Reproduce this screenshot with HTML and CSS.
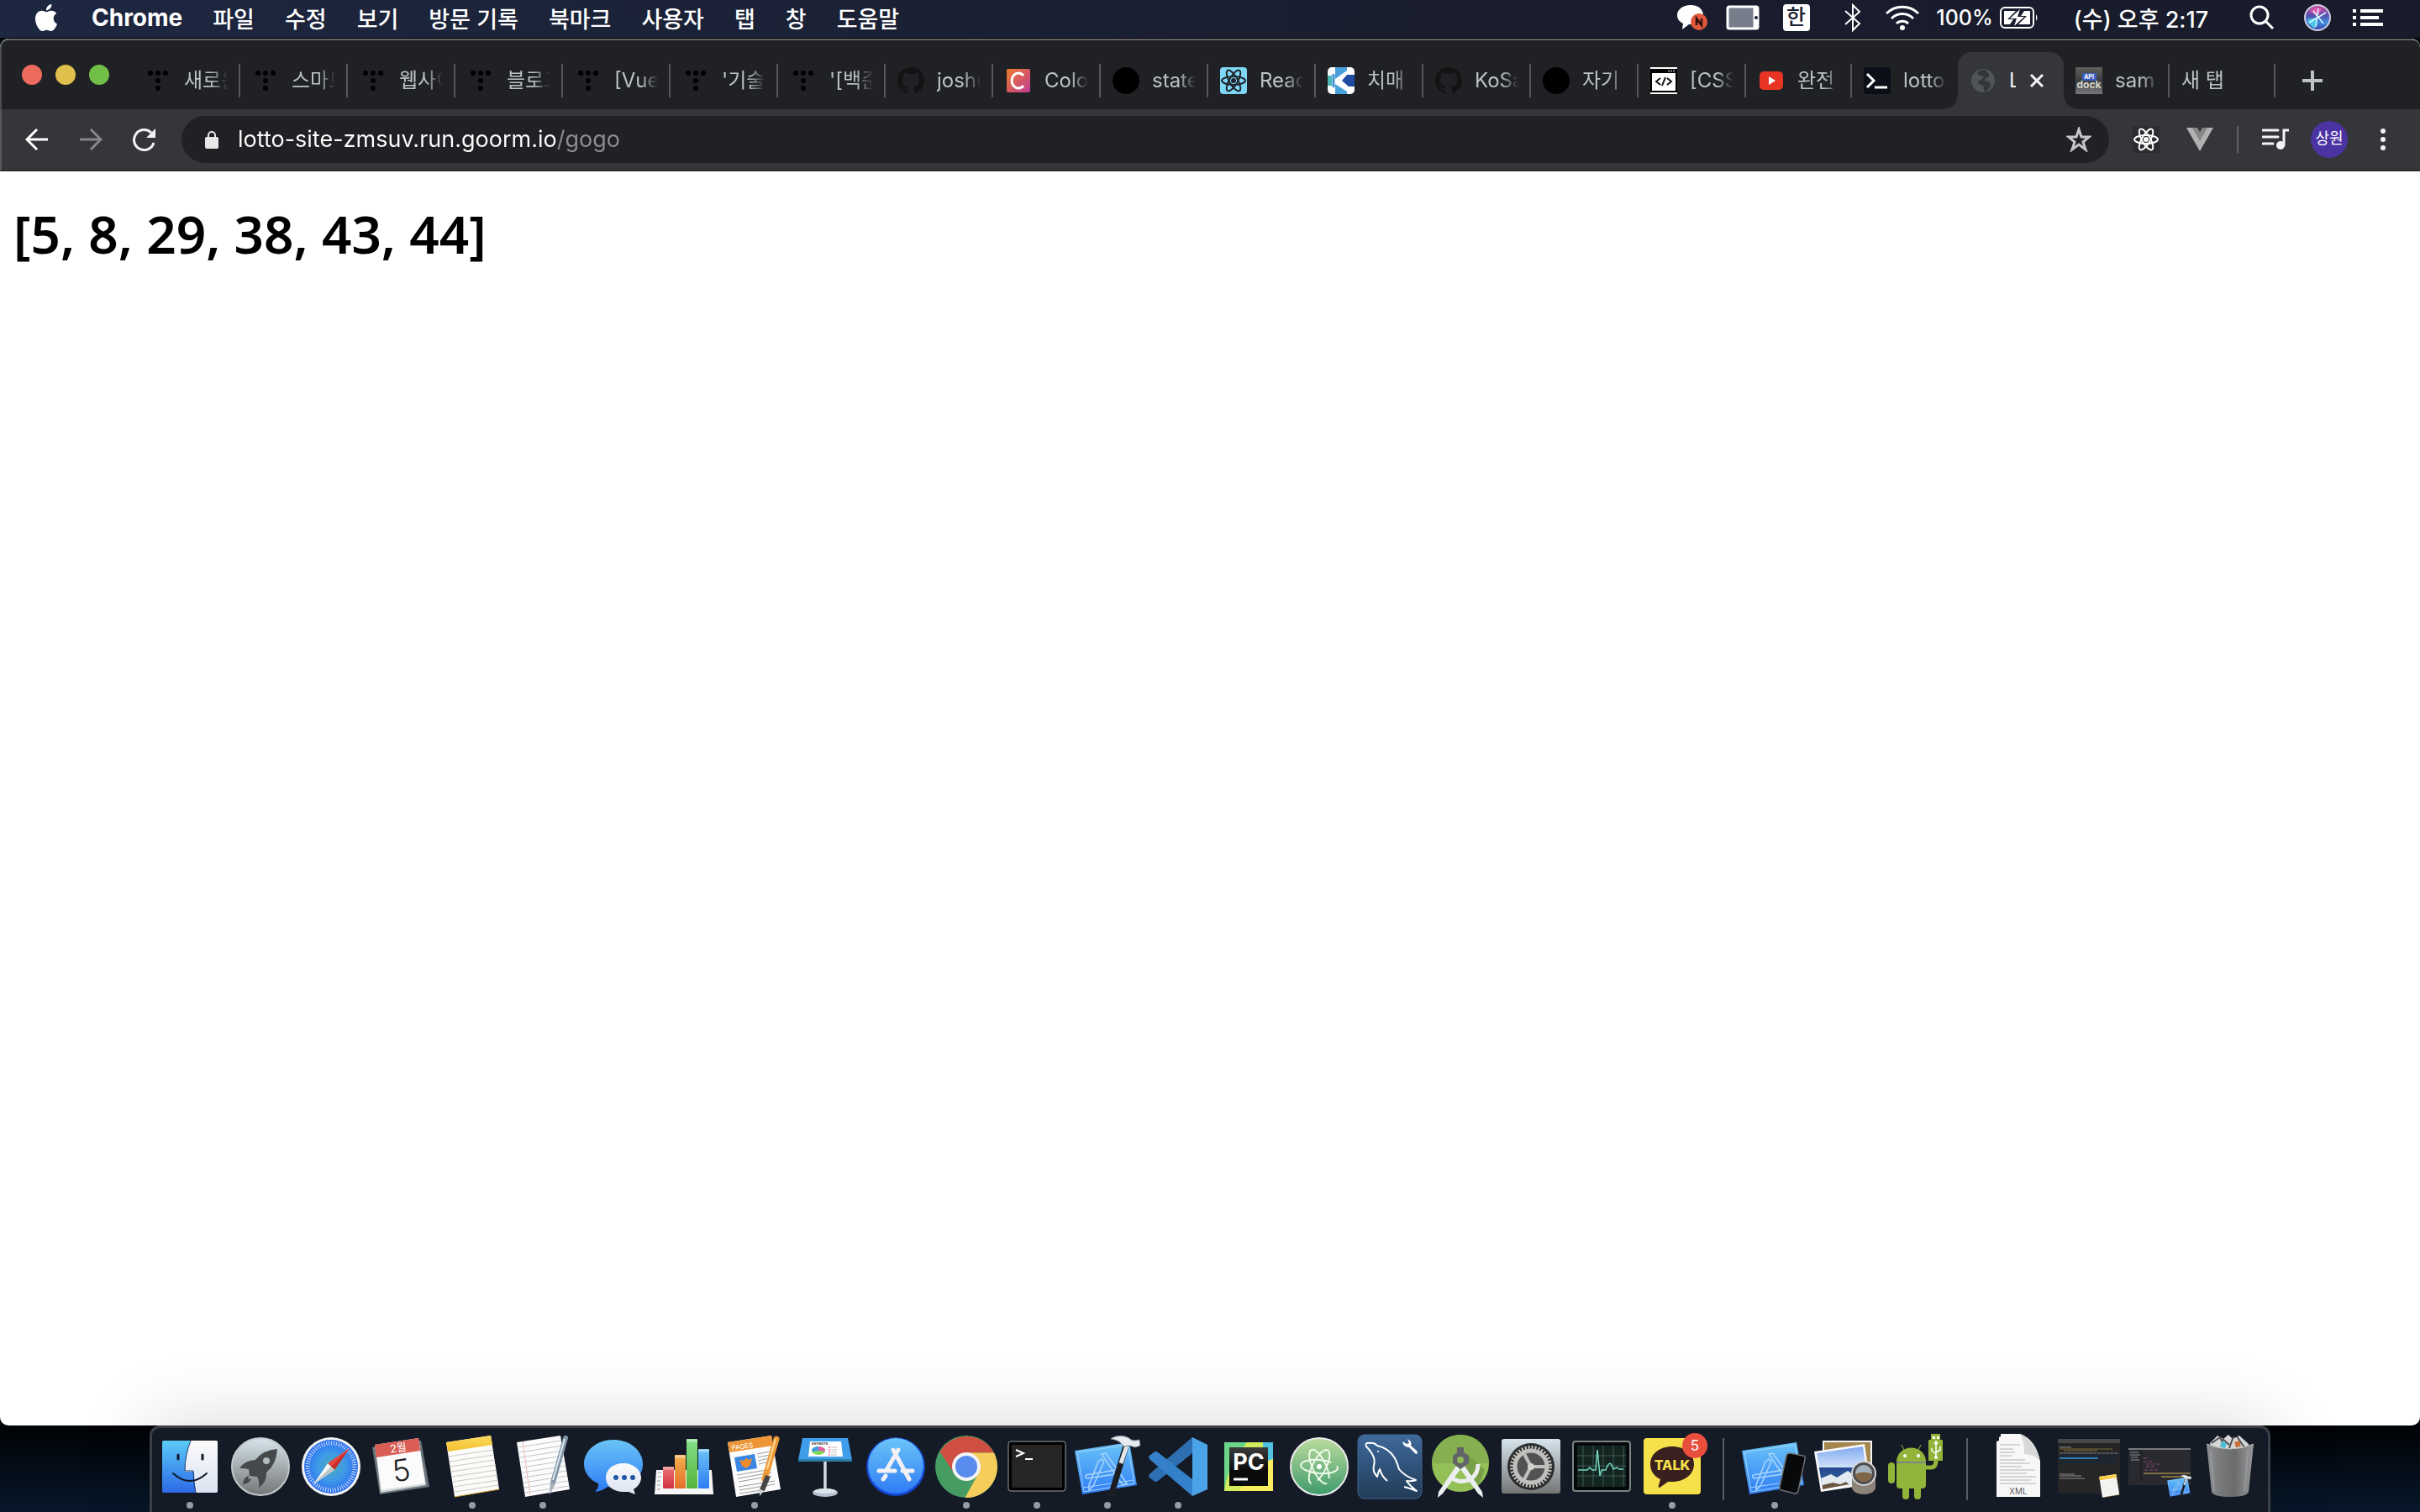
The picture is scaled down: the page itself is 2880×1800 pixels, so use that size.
FILE: index.html
```html
<!DOCTYPE html>
<html lang="ko">
<head>
    <meta charset="UTF-8">
    <meta name="viewport" content="width=device-width, initial-scale=1.0">
    <title>Lotto</title>
    <link rel="stylesheet" href="styles.css">
</head>
<body>
    <!-- shared gradients and repeated icons -->
    <svg class="defs" width="0" height="0" aria-hidden="true">
        <defs>
            <linearGradient id="g-blue" x1="0" y1="0" x2="0" y2="1"><stop offset="0" stop-color="#6ac4f7"/><stop offset="1" stop-color="#2f7cf6"/></linearGradient>
            <linearGradient id="g-finder" x1="0" y1="0" x2="0" y2="1"><stop offset="0" stop-color="#5ccbf8"/><stop offset="1" stop-color="#2c69e6"/></linearGradient>
            <linearGradient id="g-white" x1="0" y1="0" x2="0" y2="1"><stop offset="0" stop-color="#fafafa"/><stop offset="1" stop-color="#dbe4f2"/></linearGradient>
            <linearGradient id="g-steel" x1="0" y1="0" x2="0" y2="1"><stop offset="0" stop-color="#d6e5ec"/><stop offset="1" stop-color="#757575"/></linearGradient>
            <linearGradient id="g-metal" x1="0" y1="0" x2="1" y2="0"><stop offset="0" stop-color="#8b99a6"/><stop offset=".5" stop-color="#eef3f7"/><stop offset="1" stop-color="#7b8893"/></linearGradient>
            <linearGradient id="g-yellow" x1="0" y1="0" x2="0" y2="1"><stop offset="0" stop-color="#fddb60"/><stop offset="1" stop-color="#f3c02f"/></linearGradient>
            <linearGradient id="g-red" x1="0" y1="0" x2="0" y2="1"><stop offset="0" stop-color="#ee7474"/><stop offset="1" stop-color="#cf3242"/></linearGradient>
            <linearGradient id="g-orange" x1="0" y1="0" x2="0" y2="1"><stop offset="0" stop-color="#f4b04e"/><stop offset="1" stop-color="#e2702a"/></linearGradient>
            <linearGradient id="g-green" x1="0" y1="0" x2="0" y2="1"><stop offset="0" stop-color="#84e08a"/><stop offset="1" stop-color="#52b539"/></linearGradient>
            <linearGradient id="g-atom" x1="0" y1="0" x2="0" y2="1"><stop offset="0" stop-color="#bcdc9c"/><stop offset="1" stop-color="#3e9a6d"/></linearGradient>
            <linearGradient id="g-mysql" x1="0" y1="0" x2="0" y2="1"><stop offset="0" stop-color="#3e6a9b"/><stop offset="1" stop-color="#223b58"/></linearGradient>
            <linearGradient id="g-black" x1="0" y1="0" x2="0" y2="1"><stop offset="0" stop-color="#3c3c3c"/><stop offset=".6" stop-color="#0a0a0a"/></linearGradient>
            <linearGradient id="g-sea" x1="0" y1="0" x2="0" y2="1"><stop offset="0" stop-color="#7fa9ef"/><stop offset=".5" stop-color="#d2e2fa"/><stop offset=".5" stop-color="#23478f"/><stop offset="1" stop-color="#3f6f9f"/></linearGradient>
            <linearGradient id="g-trash" x1="0" y1="0" x2="1" y2="0"><stop offset="0" stop-color="#8f9193"/><stop offset=".3" stop-color="#77797b"/><stop offset=".6" stop-color="#6a6c6e"/><stop offset="1" stop-color="#97999b"/></linearGradient>
            <linearGradient id="g-color" x1="0" y1="0" x2="1" y2="1"><stop offset="0" stop-color="#ee7a2c"/><stop offset="1" stop-color="#c03c96"/></linearGradient>
            <linearGradient id="g-dock" x1="0" y1="0" x2="0" y2="1"><stop offset="0" stop-color="#5f605a"/><stop offset=".5" stop-color="#3b3d40"/><stop offset="1" stop-color="#77787f"/></linearGradient>
            <radialGradient id="g-safari"><stop offset="0" stop-color="#4aa9b8"/><stop offset=".5" stop-color="#3f9be8"/><stop offset="1" stop-color="#2b6df0"/></radialGradient>
            <linearGradient id="g-siri" x1="0" y1="0" x2="0" y2="1"><stop offset="0" stop-color="#d24f9f"/><stop offset=".4" stop-color="#5a4fae"/><stop offset=".7" stop-color="#3f8fe0"/><stop offset="1" stop-color="#3a3fa8"/></linearGradient>
        </defs>
        <symbol id="i-tistory" viewBox="0 0 32 32"><g fill="#000"><circle cx="7" cy="7" r="3"/><circle cx="16" cy="7" r="3"/><circle cx="25" cy="7" r="3"/><circle cx="16" cy="16" r="3"/><circle cx="16" cy="25" r="3"/></g></symbol>
        <symbol id="i-github" viewBox="0 0 16 16"><path fill="#141314" d="M8 0C3.58 0 0 3.58 0 8c0 3.54 2.29 6.53 5.47 7.59.4.07.55-.17.55-.38 0-.19-.01-.82-.01-1.49-2.01.37-2.53-.49-2.69-.94-.09-.23-.48-.94-.82-1.13-.28-.15-.68-.52-.01-.53.63-.01 1.08.58 1.23.82.72 1.21 1.87.87 2.33.66.07-.52.28-.87.51-1.07-1.78-.2-3.64-.89-3.64-3.95 0-.87.31-1.59.82-2.15-.08-.2-.36-1.02.08-2.12 0 0 .67-.21 2.2.82.64-.18 1.32-.27 2-.27s1.36.09 2 .27c1.53-1.04 2.2-.82 2.2-.82.44 1.1.16 1.92.08 2.12.51.56.82 1.27.82 2.15 0 3.07-1.87 3.75-3.65 3.95.29.25.54.73.54 1.48 0 1.07-.01 1.93-.01 2.2 0 .21.15.46.55.38A8.01 8.01 0 0 0 16 8c0-4.42-3.58-8-8-8z"/></symbol>
        <symbol id="i-ball" viewBox="0 0 32 32"><circle cx="16" cy="16" r="16" fill="#000"/></symbol>
        <symbol id="i-react" viewBox="0 0 32 32"><g fill="none" stroke="currentColor" stroke-width="2"><ellipse cx="16" cy="16" rx="14" ry="5"/><ellipse cx="16" cy="16" rx="14" ry="5" transform="rotate(60 16 16)"/><ellipse cx="16" cy="16" rx="14" ry="5" transform="rotate(120 16 16)"/></g><circle cx="16" cy="16" r="3" fill="currentColor"/></symbol>
        <symbol id="i-xcode" viewBox="0 0 84 84">
            <path d="M3 23 68 13 77 64 12 75Z" fill="url(#g-blue)"/>
            <path d="M6 25 66 16 74 62 14 72ZM13 67 73 58" fill="none" stroke="#a5d4fb" stroke-width="1"/>
            <path d="M16 52 58 45M17 56 58 50M16 52v4M31 36l4-3 3 3-13 29-5 5v-6ZM35 27l5-1 25 36-5 2Z" fill="none" stroke="#a9d6fb" stroke-width="1.5"/>
        </symbol>
        <symbol id="i-hammer" viewBox="0 0 84 84">
            <path d="M64 17 47 74" stroke="#1c1d20" stroke-width="7" stroke-linecap="round"/>
            <path d="M66 14 58 38" stroke="#dfe5ea" stroke-width="5"/>
            <path d="M46 9C52 4 64 4 70 10l4 1 6-1 1 7-6 2-7-2-7 1C58 12 52 10 46 9Z" fill="#e5ebf0" stroke="#78828c"/>
        </symbol>
        <symbol id="i-notes" viewBox="0 0 84 84">
            <path d="M11 13 64 5 74 69 21 78Z" fill="#fbfbf9"/>
            <path d="M11 13 64 5 66 16 13 24Z" fill="url(#g-yellow)"/>
            <path d="M14 30 67 22M15 36 68 28M16 42 69 34M17 48 70 40M18 54 71 46M19 60 72 52M20 66 73 58M21 72 73 64" stroke="#c9c9c5" stroke-width="1"/>
            <path d="M21 78 74 69" stroke="#d3a537" stroke-width="1"/>
        </symbol>
    </svg>

    <header class="menubar">
        <nav class="menus">
            <button class="menu apple" aria-label="Apple"><svg width="32" height="32" viewBox="0 0 24 24"><path fill="#fff" d="M12.152 6.896c-.948 0-2.415-1.078-3.96-1.04-2.04.027-3.91 1.183-4.961 3.014-2.117 3.675-.546 9.103 1.519 12.09 1.013 1.454 2.208 3.09 3.792 3.039 1.52-.065 2.09-.987 3.935-.987 1.831 0 2.35.987 3.96.948 1.637-.026 2.676-1.48 3.676-2.948 1.156-1.688 1.636-3.325 1.662-3.415-.039-.013-3.182-1.221-3.22-4.857-.026-3.04 2.48-4.494 2.597-4.559-1.429-2.09-3.623-2.324-4.39-2.376-2-.156-3.675 1.09-4.61 1.09zM15.53 3.83c.843-1.012 1.4-2.427 1.245-3.83-1.207.052-2.662.805-3.532 1.818-.78.896-1.454 2.338-1.273 3.714 1.338.104 2.715-.688 3.559-1.701"/></svg></button>
            <button class="menu app-name">Chrome</button>
            <button class="menu">파일</button>
            <button class="menu">수정</button>
            <button class="menu">보기</button>
            <button class="menu">방문 기록</button>
            <button class="menu">북마크</button>
            <button class="menu">사용자</button>
            <button class="menu">탭</button>
            <button class="menu">창</button>
            <button class="menu">도움말</button>
        </nav>
        <div class="status">
            <button class="status-item" aria-label="알림"><svg width="38" height="32" viewBox="0 0 38 32"><path fill="#fff" d="M17 1C8 1 1 6 1 13c0 5 3 8 7 10l-1 7 8-6h4l13-8C33 6 26 1 17 1Z"/><circle cx="27" cy="21" r="10" fill="#e2583c"/><path d="M24 25v-8l6 8v-8" fill="none" stroke="#2b1410" stroke-width="2.5"/></svg></button>
            <button class="status-item" aria-label="화면"><svg width="40" height="30" viewBox="0 0 40 30"><rect x="2" y="2" width="36" height="26" rx="2" fill="#787d8c" stroke="#fff" stroke-width="3"/><path d="M35 2v26" stroke="#fff" stroke-width="5"/><circle cx="36" cy="15" r="2" fill="#1a2033"/></svg></button>
            <button class="status-item input-source"><span class="han">한</span></button>
            <button class="status-item bluetooth" aria-label="블루투스"><svg width="22" height="34" viewBox="0 0 22 34"><path d="M2 9l17 15-8 8V2l8 8L2 25" fill="none" stroke="#fff" stroke-width="2"/></svg></button>
            <button class="status-item wifi" aria-label="Wi-Fi"><svg width="42" height="32" viewBox="0 0 42 32"><g fill="none" stroke="#fff" stroke-width="3"><path d="M2 11a27 27 0 0 1 38 0"/><path d="M8 17a18 18 0 0 1 26 0"/><path d="M14 23a10 10 0 0 1 14 0"/></g><circle cx="21" cy="28" r="3" fill="#fff"/></svg></button>
            <button class="status-item battery">100% <svg width="46" height="26" viewBox="0 0 46 26"><rect x="1" y="1" width="39" height="24" rx="5" fill="none" stroke="#fff" stroke-width="2"/><path d="M5 5h14L9 15h7l-4 6H5ZM36 21H22L32 11h-7l4-6h7ZM24 3 12 14h8l-3 9 12-11h-8Z" fill="#fff"/><path d="M43 9q3 4 0 8Z" fill="#fff"/></svg></button>
            <button class="status-item clock">(수) 오후 2:17</button>
            <button class="status-item search" aria-label="검색"><svg width="30" height="30" viewBox="0 0 30 30"><g fill="none" stroke="#fff" stroke-width="3"><circle cx="12" cy="12" r="10"/><path d="M19 19l9 9"/></g></svg></button>
            <button class="status-item" aria-label="Siri"><svg width="34" height="34" viewBox="0 0 34 34"><circle cx="17" cy="17" r="15" fill="url(#g-siri)" stroke="#cfd0e2" stroke-width="2"/><path d="M8 9q8-6 14-2l-5 9Z" fill="#e35bb4"/><path d="M5 19 17 17 14 30Q7 26 5 19Z" fill="#4cc7ea"/><path d="M7 23 27 11M12 9l12 15M18 6l-3 22" stroke="#d9fbff" stroke-width="1.5"/></svg></button>
            <button class="status-item" aria-label="알림 센터"><svg width="38" height="22" viewBox="0 0 38 22"><path d="M1 3h4M1 11h4M1 19h4M10 3h27M10 11h22M10 19h27" stroke="#fff" stroke-width="4"/></svg></button>
        </div>
    </header>

    <main class="window">
        <div class="tabstrip" role="tablist">
            <div class="lights">
                <button class="light close" aria-label="닫기"></button>
                <button class="light minimize" aria-label="최소화"></button>
                <button class="light zoom" aria-label="확대"></button>
            </div>
            <button class="tab" role="tab"><svg class="favicon"><use href="#i-tistory"/></svg><span class="title">새로운</span></button>
            <button class="tab" role="tab"><svg class="favicon"><use href="#i-tistory"/></svg><span class="title">스마트</span></button>
            <button class="tab" role="tab"><svg class="favicon"><use href="#i-tistory"/></svg><span class="title">웹사이</span></button>
            <button class="tab" role="tab"><svg class="favicon"><use href="#i-tistory"/></svg><span class="title">블로그</span></button>
            <button class="tab" role="tab"><svg class="favicon"><use href="#i-tistory"/></svg><span class="title">[Vue</span></button>
            <button class="tab" role="tab"><svg class="favicon"><use href="#i-tistory"/></svg><span class="title">'기술</span></button>
            <button class="tab" role="tab"><svg class="favicon"><use href="#i-tistory"/></svg><span class="title">'[백준</span></button>
            <button class="tab" role="tab"><svg class="favicon"><use href="#i-github"/></svg><span class="title">joshu</span></button>
            <button class="tab" role="tab"><svg class="favicon" viewBox="0 0 32 32"><rect x="2" y="2" width="28" height="28" rx="2" fill="url(#g-color)"/><path d="M22 10a8 9 0 1 0 0 12" fill="none" stroke="#fff" stroke-width="3"/></svg><span class="title">Colo</span></button>
            <button class="tab" role="tab"><svg class="favicon"><use href="#i-ball"/></svg><span class="title">state</span></button>
            <button class="tab" role="tab"><svg class="favicon react-tile"><use href="#i-react"/></svg><span class="title">Reac</span></button>
            <button class="tab" role="tab"><svg class="favicon" viewBox="0 0 32 32"><rect width="32" height="32" rx="5" fill="#fff"/><path d="M9 0h14v4L9 14Z" fill="#48a0dd"/><path d="M0 10h5v12H0Z" fill="#48b5b8"/><path d="M17 16l6-7h9v14h-7Z" fill="#2049a0"/><path d="M9 20l14 9v3H9Z" fill="#48a0dd"/><path d="M7 8v16" stroke="#3f94d4" stroke-width="3"/></svg><span class="title">치매</span></button>
            <button class="tab" role="tab"><svg class="favicon"><use href="#i-github"/></svg><span class="title">KoSa</span></button>
            <button class="tab" role="tab"><svg class="favicon"><use href="#i-ball"/></svg><span class="title">자기</span></button>
            <button class="tab" role="tab"><svg class="favicon" viewBox="0 0 32 32"><path fill="#fff" d="M0 0h32v32H0Z"/><path d="M0 2h32v5H0ZM0 28h32v2H0Z"/><path d="M1 5v24M31 5v24" stroke="#000" stroke-width="2"/><path d="M22 3v3M25 3v3M28 3v3" stroke="#888" stroke-width="1.5"/><path d="M12 13l-5 4 5 4M20 13l5 4-5 4M18 12l-4 10" fill="none" stroke="#111" stroke-width="2"/></svg><span class="title">[CSS</span></button>
            <button class="tab narrow" role="tab"><svg class="favicon" viewBox="0 0 32 32"><rect x="2" y="5" width="28" height="22" rx="5" fill="#e93323"/><path d="M13 11l8 5-8 5Z" fill="#fff"/></svg><span class="title">완전</span></button>
            <button class="tab narrow no-line" role="tab"><svg class="favicon" viewBox="0 0 32 32"><rect width="32" height="32" rx="2" fill="#0a0f17"/><path d="M4 8l8 8-8 8" fill="none" stroke="#fff" stroke-width="3"/><path d="M13 24h15" stroke="#fff" stroke-width="3"/></svg><span class="title">lotto</span></button>
            <div class="tab narrow active" role="tab" aria-selected="true">
                <svg class="favicon" viewBox="0 0 32 32"><circle cx="16" cy="16" r="14" fill="#505357"/><path d="M18 3q-8 0-9 5 3 3 7 2 1 4-3 5-4 1-2 5 5 1 6 4-1 5 2 5 7-5 6-9-2-4-7-4 0-3 4-4 3-3-1-6Z" fill="#35363a"/></svg>
                <span class="title">L</span>
                <button class="tab-close" aria-label="탭 닫기"><svg width="18" height="18" viewBox="0 0 18 18"><path d="M2 2l14 14M16 2 2 16" stroke="#f1f3f4" stroke-width="3"/></svg></button>
            </div>
            <button class="tab narrow" role="tab"><svg class="favicon" viewBox="0 0 32 32"><rect width="32" height="32" fill="url(#g-dock)"/><rect x="8" y="7" width="17" height="9" rx="1" fill="#3a5fc0"/><text class="t-api" x="16" y="14" text-anchor="middle">API</text><text class="t-dock" x="16" y="25" text-anchor="middle">dock</text></svg><span class="title">sam</span></button>
            <button class="tab narrow" role="tab"><span class="title">새 탭</span></button>
            <button class="new-tab" aria-label="새 탭 열기"><svg width="24" height="24" viewBox="0 0 24 24"><path d="M12 1v22M1 12h22" stroke="#bdc1c6" stroke-width="4" stroke-linecap="round"/></svg></button>
        </div>

        <div class="toolbar">
            <button class="tool" aria-label="뒤로"><svg width="28" height="28" viewBox="0 0 28 28"><path d="M14 2 2 14l12 12M2 14h25" fill="none" stroke="#fff" stroke-width="3"/></svg></button>
            <button class="tool" aria-label="앞으로"><svg width="28" height="28" viewBox="0 0 28 28"><path d="M14 2l12 12-12 12M26 14H1" fill="none" stroke="#86878a" stroke-width="3"/></svg></button>
            <button class="tool" aria-label="새로고침"><svg width="28" height="28" viewBox="0 0 28 28"><path d="M25 18A12 12 0 1 1 22 6" fill="none" stroke="#f1f3f4" stroke-width="3"/><path d="M27 1v11H16Z" fill="#f1f3f4"/></svg></button>
            <div class="omnibox">
                <svg width="18" height="22" viewBox="0 0 18 22"><rect x="1" y="8" width="16" height="14" rx="2" fill="#e8e8e8"/><path d="M5 9V6a4 4 0 0 1 8 0v3" fill="none" stroke="#e8e8e8" stroke-width="2"/></svg>
                <input class="url" type="text" aria-label="주소창" value="lotto-site-zmsuv.run.goorm.io/gogo">
                <button class="star" aria-label="북마크 추가"><svg width="30" height="30" viewBox="0 0 30 30"><path d="M15 3l3 9h9l-7 6 3 9-8-6-8 6 3-9-7-6h9Z" fill="none" stroke="#c4c6c9" stroke-width="3"/></svg></button>
            </div>
            <button class="tool" aria-label="React"><svg class="react-ext" width="32" height="32"><use href="#i-react"/></svg></button>
            <button class="tool" aria-label="Vue"><svg width="32" height="28" viewBox="0 0 32 28"><path d="M0 0h12l4 8 4-8h12L16 28Z" fill="#b1b1b1"/><path d="M7 0h6l3 5 3-5h6l-9 16Z" fill="#868686"/></svg></button>
            <span class="divider"></span>
            <button class="tool" aria-label="재생목록"><svg width="32" height="28" viewBox="0 0 32 28"><path d="M1 3h18M1 11h18M1 19h12" stroke="#f1f3f4" stroke-width="3" stroke-linecap="round"/><circle cx="22" cy="21" r="5" fill="#f1f3f4"/><path d="M26 22V3h6" fill="none" stroke="#f1f3f4" stroke-width="3"/></svg></button>
            <button class="tool profile"><span class="avatar">상원</span></button>
            <button class="tool" aria-label="메뉴"><svg width="8" height="28" viewBox="0 0 8 28"><g fill="#f1f3f4"><circle cx="4" cy="4" r="3"/><circle cx="4" cy="14" r="3"/><circle cx="4" cy="24" r="3"/></g></svg></button>
        </div>

        <section class="page">
            <h1>[5, 8, 29, 38, 43, 44]</h1>
        </section>
    </main>

    <footer class="desktop">
        <div class="dock">
            <button class="app running" aria-label="Finder"><svg viewBox="0 0 84 84">
                <rect x="9" y="11" width="66" height="62" rx="2" fill="url(#g-finder)"/>
                <path d="M43 11h30q2 0 2 2v58q0 2-2 2H49q-2-13-2-25H36q0-20 7-37Z" fill="url(#g-white)"/>
                <path d="M43 11q-7 17-7 36h10q0 13 3 26" fill="none" stroke="#1c3c6c" stroke-width="1"/>
                <path d="M28 28v5M57 28v5" stroke="#10182a" stroke-width="3" stroke-linecap="round"/>
                <path d="M22 50q20 18 40 0" fill="none" stroke="#10182a" stroke-width="2" stroke-linecap="round"/></svg></button>
            <button class="app" aria-label="Launchpad"><svg viewBox="0 0 84 84">
                <circle cx="42" cy="42" r="34" fill="url(#g-steel)" stroke="#c3cacd" stroke-width="2"/>
                <path d="M62 21Q45 22 36 34 24 34 17 44q6 0 11 1l1 8 9 1q3 5 2 13 10-7 9-18 12-10 13-28Z" fill="#45494c"/>
                <path d="M28 53q-6 1-7 10 8-1 10-7l-4 1Z" fill="#45494c"/>
                <circle cx="49" cy="35" r="4" fill="#b3bcbf"/></svg></button>
            <button class="app" aria-label="Safari"><svg viewBox="0 0 84 84">
                <circle cx="42" cy="42" r="35" fill="#f2f2f2"/><circle cx="42" cy="42" r="32" fill="url(#g-safari)"/>
                <circle cx="42" cy="42" r="28" fill="none" stroke="#cfe0fa" stroke-width="5" stroke-dasharray="1 1.93"/>
                <path d="M64 20 38 38l8 8Z" fill="#e8463c"/><path d="M64 20 46 46l-4-4Z" fill="#c22f2b"/>
                <path d="M21 63l17-25 8 8Z" fill="#f5f5f5"/><path d="M21 63l21-21 4 4Z" fill="#bfc4c8"/></svg></button>
            <button class="app" aria-label="캘린더"><svg viewBox="0 0 84 84">
                <path d="M7 19 65 11 75 66 16 75Z" fill="#69757c"/>
                <path d="M12 30 64 22 71 64 17 73Z" fill="#d3d6d8"/>
                <path d="M10 16 62 8 70 62 18 70Z" fill="#fbfbfb"/>
                <path d="M10 16 62 8 64 23 12 31Z" fill="#d95d53"/>
                <g transform="rotate(-8 42 42)"><text class="t-month" x="41" y="24" text-anchor="middle">2월</text><text class="t-day" x="41" y="59" text-anchor="middle">5</text></g></svg></button>
            <button class="app running" aria-label="메모"><svg viewBox="0 0 84 84"><use href="#i-notes"/></svg></button>
            <button class="app running" aria-label="텍스트 편집기"><svg viewBox="0 0 84 84">
                <path d="M11 13 63 5 74 69 21 78Z" fill="#fcfcfc"/>
                <path d="M13 19 64 11M14 25 65 17M15 31 66 23M16 37 67 29M17 43 68 35M18 49 69 41M19 55 70 47M19 61 71 53M20 67 72 59M21 73 73 65" stroke="#c4c6cc" stroke-width="1"/>
                <path d="M18 12l9 64" stroke="#f0b9b5" stroke-width="1"/>
                <path d="M69 8 54 61" stroke="#8294a6" stroke-width="6" stroke-linecap="round"/><path d="M68 9 54 58" stroke="#dce6ee" stroke-width="2"/>
                <path d="M51 60l6 2-7 14Z" fill="#a5afb8"/></svg></button>
            <button class="app" aria-label="메시지"><svg viewBox="0 0 84 84">
                <path d="M42 10c20 0 35 13 35 29S62 67 42 67l-7-1q-6 5-15 6 5-5 4-10C14 58 7 49 7 39 7 23 22 10 42 10Z" fill="url(#g-blue)"/>
                <path d="M54 38c12 0 21 8 21 17 0 6-4 11-9 14l2 6-8-3H54c-12 0-21-7-21-17s9-17 21-17Z" fill="url(#g-white)"/>
                <g fill="#1f57a5"><circle cx="45" cy="55" r="3"/><circle cx="55" cy="55" r="3"/><circle cx="65" cy="55" r="3"/></g></svg></button>
            <button class="app" aria-label="Numbers"><svg viewBox="0 0 84 84">
                <path d="M9 46h66l2 29H7Z" fill="#f6f6f6"/><path d="M11 49h4M11 54h4M10 59h4M10 64h4M10 69h4" stroke="#999" stroke-width="1"/>
                <rect x="17" y="42" width="13" height="26" rx="1" fill="url(#g-red)"/><rect x="31" y="28" width="13" height="40" rx="1" fill="url(#g-orange)"/>
                <rect x="45" y="9" width="13" height="59" rx="1" fill="url(#g-green)"/><rect x="59" y="21" width="13" height="47" rx="1" fill="url(#g-blue)"/>
                <path d="M17 44h13M31 30h13M45 11h13M59 23h13" stroke="#fff" stroke-opacity=".4" stroke-width="3"/></svg></button>
            <button class="app running" aria-label="Pages"><svg viewBox="0 0 84 84">
                <path d="M10 13 62 5 73 69 20 78Z" fill="#fcfcfc"/><path d="M10 13 62 5 64 17 12 25Z" fill="#ee9636"/>
                <g transform="rotate(-8 42 42)"><text class="t-pages" x="18" y="19">PAGES</text></g>
                <path d="M18 31 42 27 45 44 21 48Z" fill="#3b86e2"/><path d="M24 34l5 1 3-3 3 2 4-2-2 8-5 4-5-3Z" fill="#f08a2c"/>
                <path d="M45 27 60 24M46 31 60 28M46 35 60 32M47 39 60 36M21 52 62 45M22 56 62 49M23 60 62 53M23 66 66 59M24 70 66 63M24 74 50 70" stroke="#9c9c9c" stroke-width="1"/>
                <path d="M68 9 54 57" stroke="#eb9a36" stroke-width="7" stroke-linecap="round"/><path d="M67 9 57 45" stroke="#ffd792" stroke-width="2"/>
                <path d="M58 53l-7 17" stroke="#454545" stroke-width="6"/><path d="M48 69l5 2-5 6Z" fill="#d0d0d0"/></svg></button>
            <button class="app" aria-label="Keynote"><svg viewBox="0 0 84 84">
                <path d="M40 36h4v36h-4Z" fill="url(#g-metal)"/><ellipse cx="42" cy="73" rx="15" ry="5" fill="#b7c2d0"/><ellipse cx="42" cy="71" rx="13" ry="3" fill="#dce4ec"/>
                <path d="M15 8h54l5 26v2H10v-2Z" fill="#3f9de9"/><path d="M10 33h64v3H10Z" fill="#2d7fa8"/>
                <path d="M24 12h37l2 18H22Z" fill="#fff"/><text class="t-key" x="26" y="16">KEYNOTE</text>
                <ellipse cx="34" cy="23" rx="8" ry="5" fill="#7ed957"/><path d="M34 23V18a8 5 0 0 0-8 6Z" fill="#3d9ce8"/><path d="M34 23V18a8 5 0 0 1 8 6Z" fill="#e35ba8"/>
                <path d="M46 19h2M46 22h2M46 25h2M46 28h2" stroke="#e27" stroke-width="1"/><path d="M49 19h7M49 22h7M49 25h7M49 28h7" stroke="#bbb" stroke-width="1"/></svg></button>
            <button class="app" aria-label="App Store"><svg viewBox="0 0 84 84">
                <circle cx="42" cy="42" r="35" fill="#1447d4"/><circle cx="42" cy="41" r="33" fill="url(#g-blue)"/>
                <g stroke="#f1f1f3" stroke-width="5" stroke-linecap="round"><path d="M39 22l19 35M45 22 31 46M22 47h19M50 47h12M30 53l-3 4"/></g></svg></button>
            <button class="app running" aria-label="Chrome"><svg viewBox="0 0 84 84">
                <circle cx="42" cy="42" r="37" fill="#459d63"/>
                <path d="M10.600 24.300A37 37 0 0 1 75 25.400H42L27.700 50.200Z" fill="#cf4f43"/>
                <path d="M75 25.400A37 37 0 0 1 40.500 79L56.300 50.200 42 25.400Z" fill="#f5cd5b"/>
                <circle cx="42" cy="42" r="17" fill="#f4f4f4"/><circle cx="42" cy="42" r="13" fill="#5a8bee"/></svg></button>
            <button class="app running" aria-label="터미널"><svg viewBox="0 0 84 84">
                <rect x="8" y="12" width="68" height="59" rx="3" fill="#000" stroke="#98a09f" stroke-width="1"/><rect x="12" y="16" width="60" height="51" fill="#262626"/>
                <path d="M17 22l9 4-9 4M28 33h9" fill="none" stroke="#fff" stroke-width="2"/></svg></button>
            <button class="app running" aria-label="Xcode"><svg viewBox="0 0 84 84"><use href="#i-xcode"/><use href="#i-hammer"/></svg></button>
            <button class="app running" aria-label="Visual Studio Code"><svg viewBox="0 0 84 84">
                <path d="M7 54q0-2 2-4L59 7v19L18 59q-3 2-5 0l-5-4Z" fill="#2e6fb2"/>
                <path d="M7 30q0 2 2 4l50 43V57L18 25q-3-2-5 0l-5 4Z" fill="#3580cb"/>
                <path d="M59 7l18 9v53l-18 8Z" fill="#4ba3e8"/></svg></button>
            <button class="app" aria-label="PyCharm"><svg viewBox="0 0 84 84">
                <rect x="13" y="13" width="58" height="58" fill="#6bd68b"/><path d="M40 13h20l11 20v38H13q4-30 27-58Z" fill="#d2ec5e"/><path d="M59 13h12v20l-12 4Z" fill="#4fc3e0"/><path d="M60 37l11-4v38H30Z" fill="#f8ee5e"/>
                <rect x="19" y="19" width="46" height="46" fill="url(#g-black)"/><text class="t-pc" x="42" y="46" text-anchor="middle">PC</text><path d="M24 57h17" stroke="#fff" stroke-width="3"/></svg></button>
            <button class="app" aria-label="Atom"><svg viewBox="0 0 84 84">
                <circle cx="42" cy="42" r="34" fill="url(#g-atom)" stroke="#eaeaea" stroke-width="2"/>
                <g fill="none" stroke="#eefae9" stroke-width="2"><ellipse cx="42" cy="42" rx="22" ry="8" transform="rotate(5 42 42)" stroke-dasharray="88 8"/><ellipse cx="42" cy="42" rx="22" ry="8" transform="rotate(65 42 42)" stroke-dasharray="92 8"/><ellipse cx="42" cy="42" rx="22" ry="8" transform="rotate(117 42 42)" stroke-dasharray="90 8"/></g>
                <circle cx="42" cy="42" r="3" fill="#fff"/></svg></button>
            <button class="app" aria-label="MySQL Workbench"><svg viewBox="0 0 84 84">
                <rect x="4" y="4" width="76" height="76" rx="8" fill="url(#g-mysql)" stroke="#3d6893" stroke-width="1"/>
                <path d="M39 59q-7-6-9-14-2 4-3 9-6-6-4-13 2-8-2-14-3-5-7-9-2-5 4-4 5-1 9 3 14 3 21 15 3 6 5 13 6 8 20 13-6 2-11 1 3 5 12 12-7-3-15-5" fill="none" stroke="#fff" stroke-width="2" stroke-linejoin="round"/><circle cx="28" cy="24" r="1" fill="#fff"/>
                <path d="M63 9q6 3 4 8l7 6q2 4-1 4l-8-8q-7 0-8-7l5 3 3-1Z" fill="#fff"/></svg></button>
            <button class="app" aria-label="Android Studio"><svg viewBox="0 0 84 84">
                <circle cx="42" cy="38" r="34" fill="#93c057"/><path d="M8 38a34 34 0 0 1 68 0Z" fill="#86b04f"/><path d="M49 26l22 20-7 18-24-25Z" fill="#79a048"/>
                <path d="M31 55q11 8 23 2 9-6 9-18" fill="none" stroke="#eceff0" stroke-width="5"/>
                <path d="M37 41l5 4-21 29-6 5 1-7ZM47 41l-5 4 21 29 6 5-1-7Z" fill="#eceff0"/>
                <path d="M38 19h8v6l6 4v9l-10 7-9-7v-9l5-4Z" fill="#616568"/><circle cx="42" cy="34" r="4" fill="#8fbb55"/></svg></button>
            <button class="app" aria-label="시스템 환경설정"><svg viewBox="0 0 84 84">
                <rect x="7" y="9" width="70" height="65" rx="3" fill="url(#g-steel)"/><circle cx="42" cy="42" r="28" fill="#2c2d2e"/>
                <circle cx="42" cy="42" r="23" fill="none" stroke="#c4c4c2" stroke-width="4" stroke-dasharray="2 2.01"/><circle cx="42" cy="42" r="19" fill="#515253" stroke="#c1bfbb" stroke-width="5"/>
                <path d="M42 42h19M42 42l-9-17M42 42l-9 17" stroke="#c1bfbb" stroke-width="4"/><circle cx="42" cy="42" r="4" fill="#d2d1ce"/></svg></button>
            <button class="app" aria-label="활성 상태 보기"><svg viewBox="0 0 84 84">
                <rect x="8" y="12" width="68" height="59" rx="3" fill="#060909" stroke="#7c8483" stroke-width="2"/><rect x="13" y="17" width="58" height="49" fill="#142521"/>
                <path d="M20 17v49M32 17v49M44 17v49M56 17v49M68 17v49M13 29h58M13 41h58M13 53h58" stroke="#3d5d55" stroke-width="1"/>
                <path d="M14 46h11l3-3 3 3h4l2-24 3 31 2-7h5q5-15 9-1l4-2 3 2h5" fill="none" stroke="#76d8bf" stroke-width="1.5"/></svg></button>
            <button class="app running" aria-label="카카오톡"><svg viewBox="0 0 84 84">
                <rect x="8" y="8" width="68" height="67" rx="4" fill="#f7e14b"/>
                <path d="M42 18c15 0 26 9 26 21S57 60 42 60h-5l-10 7q-2 0-1-3l2-7C20 53 16 47 16 39c0-12 11-21 26-21Z" fill="#3a1f1f"/>
                <text class="t-talk" x="42" y="46" text-anchor="middle">TALK</text>
                <circle cx="69" cy="17" r="15" fill="#e84f3c"/><text class="t-badge" x="69" y="23" text-anchor="middle">5</text></svg></button>
            <span class="dock-line"></span>
            <button class="app running" aria-label="Simulator"><svg viewBox="0 0 84 84"><use href="#i-xcode"/><path d="M60 26l16 3q3 1 2 4l-8 38q-1 3-4 3l-16-4q-3-1-2-4l8-37q1-3 4-3Z" fill="#08090a" stroke="#6c6f73" stroke-width="1.5"/></svg></button>
            <button class="app" aria-label="미리보기"><svg viewBox="0 0 84 84">
                <path d="M15 11h59v40H15Z" fill="#f4f4f4"/><path d="M17 13h55v36H17Z" fill="#a5864f"/>
                <path d="M5 24 65 15 72 63 13 72Z" fill="#fafafa"/><path d="M8 26 63 18 69 60 15 68Z" fill="url(#g-sea)"/>
                <path d="M13 56l12-5 7 4 13-8 10 7 13-2 1 8-54 8Z" fill="#e2ebf0"/><path d="M15 64l12-3 9 2 7-3 3 3-31 6Z" fill="#6d563f"/>
                <path d="M50 50v18q3 7 14 7t14-7V50Z" fill="#8c8478"/><ellipse cx="64" cy="50" rx="14" ry="14" fill="#4c4c4c" stroke="#d2d4d6" stroke-width="2"/><circle cx="64" cy="50" r="10" fill="#a3b2bd"/><path d="M54 51q10-5 20 0-1 9-10 9t-10-9Z" fill="#806747"/></svg></button>
            <button class="app" aria-label="Android File Transfer"><svg viewBox="0 0 84 84">
                <g fill="#91b53a"><path d="M19 36a17 16 0 0 1 35 0ZM19 38h35v26q0 4-4 4H23q-4 0-4-4Z"/><rect x="26" y="62" width="8" height="19" rx="4"/><rect x="40" y="62" width="8" height="19" rx="4"/><rect x="9" y="37" width="8" height="25" rx="4"/><rect x="57" y="10" width="17" height="25" rx="1"/><path d="M60 3h11v8H60Z"/></g>
                <path d="M28 22l-3-6M45 22l3-6" stroke="#91b53a" stroke-width="1"/><path d="M53 43h7q6 0 6-9" fill="none" stroke="#91b53a" stroke-width="5"/>
                <path d="M19 37h35" stroke="#e8eedb" stroke-width="1"/><g fill="#fff"><circle cx="29" cy="29" r="2"/><circle cx="45" cy="29" r="2"/><path d="M62 6h3v3h-3ZM67 6h3v3h-3Z"/><circle cx="66" cy="31" r="2"/></g>
                <path d="M66 30V13M61 20v3l5 4M71 18v4l-5 3M64 15l2-3 2 3" fill="none" stroke="#fff" stroke-width="1.5"/></svg></button>
            <span class="dock-line"></span>
            <button class="app" aria-label="XML 문서"><svg viewBox="0 0 84 84">
                <path d="M21 3h23q19 7 24 33v42H16V12l3-1V7l2-1Z" fill="#f7f7f7"/><path d="M44 3q6 10 5 24 12 0 19 9Q63 10 44 3Z" fill="#d9d9d9"/>
                <path d="M20 16h24M20 21h16M20 25h18M20 29h14M20 34h30M20 38h36M20 42h26M20 46h42M20 50h32M20 54h43M20 58h37M20 62h43" stroke="#b4b4b4" stroke-width="1"/>
                <text class="t-xml" x="42" y="75" text-anchor="middle">XML</text></svg></button>
            <button class="app" aria-label="최소화된 메모"><svg viewBox="0 0 84 84">
                <rect x="5" y="9" width="74" height="65" fill="#262626"/><rect x="5" y="9" width="74" height="5" fill="#47484a"/>
                <path d="M7 19h14M7 26h40M7 51h18M7 53h26M7 56h30" stroke="#8c8c8c" stroke-width="1"/><path d="M7 21h63M12 23h40" stroke="#7d6c3a" stroke-width="1"/><path d="M7 26h70v14H7Z" fill="#20262f"/><path d="M7 32h46" stroke="#2d7fb0" stroke-width="2"/><path d="M7 26h70" stroke="#555" stroke-width="2" stroke-dasharray="4 1"/>
                <use href="#i-notes" x="50" y="49" width="32" height="32"/></svg></button>
            <button class="app" aria-label="최소화된 Xcode"><svg viewBox="0 0 84 84">
                <rect x="5" y="20" width="74" height="44" fill="#292a30"/><path d="M5 21h74" stroke="#77787c" stroke-width="2"/><path d="M7 25h10M7 28h12M8 31h8M8 34h10" stroke="#8a8d94" stroke-width="1"/><path d="M20 23v36" stroke="#151619" stroke-width="1"/>
                <path d="M23 32h5M23 36h12M26 39h16M26 42h10M24 46h18" stroke="#8a4766" stroke-width="1" stroke-dasharray="4 2"/><path d="M23 50h56M44 54h35" stroke="#9a8442" stroke-width="1.5"/>
                <use href="#i-xcode" x="50" y="50" width="31" height="31"/><use href="#i-hammer" x="50" y="50" width="31" height="31"/></svg></button>
            <button class="app" aria-label="휴지통"><svg viewBox="0 0 84 84">
                <path d="M18 14l9-9 7 4 6-5 5 5 8-4 11 10v7H20Z" fill="#d6d6d6"/><path d="M20 14l10-7 4 8M33 9l8 7M46 6l-5 14M50 6l9 13" stroke="#4f4f52" stroke-width="2" fill="none"/><path d="M32 12l6 2-2 6-6-2Z" fill="#48bcd8"/><path d="M47 13l6-2 2 7-6 1Z" fill="#c96f37"/>
                <path d="M14 15q28 12 56 0l-6 57q-2 6-22 6t-22-6Z" fill="url(#g-trash)"/><path d="M14 15q28 12 56 0" fill="none" stroke="#b9bbbd" stroke-width="1"/>
                <path d="M19 24l4 47M63 24l-4 47" stroke="#a5a7a9" stroke-width="2" stroke-opacity=".5"/></svg></button>
        </div>
    </footer>
</body>
</html>
```
FILE: styles.css
```css
* {
    box-sizing: border-box;
}
body {
    margin: 0;
    min-height: 100vh;
    display: flex;
    flex-direction: column;
    background: #020711;
    font-family: Inter, "Noto Sans CJK KR", sans-serif;
    font-size: 24px;
    color: #fff;
}
button {
    margin: 0;
    padding: 0;
    border: 0;
    background: none;
    color: inherit;
    font: inherit;
}
svg {
    display: block;
}
.defs {
    position: absolute;
}

/* menu bar */
.menubar {
    display: flex;
    justify-content: space-between;
    height: 46px;
    padding: 0 32px 3px 24px;
    background: linear-gradient(90deg, #1d2740, #191d2e 60%, #171b2a);
    border-bottom: 1px solid #000;
    font-size: 27px;
    font-weight: 500;
    white-space: nowrap;
}
.menus, .status {
    display: flex;
    align-items: center;
}
.menu {
    padding: 0 18px;
}
.menu.apple {
    padding: 0 20px 0 15px;
}
.menu.app-name {
    font-size: 28px;
    font-weight: 700;
}
.status-item {
    display: flex;
    align-items: center;
    justify-content: center;
    gap: 8px;
    width: 60px;
}
.status-item.input-source,
.status-item.bluetooth {
    width: 67px;
}
.status-item.wifi {
    width: 52px;
}
.status-item.battery {
    width: 150px;
    font-size: 25px;
}
.status-item.clock {
    width: 216px;
}
.status-item.search {
    width: 72px;
}
.han {
    width: 32px;
    height: 32px;
    border-radius: 4px;
    background: #fff;
    color: #1a2033;
    font-size: 25px;
    line-height: 30px;
}

/* browser window */
.window {
    flex: 1;
    display: flex;
    flex-direction: column;
    border-radius: 10px;
    background: #fff;
    overflow: hidden;
}
.tabstrip {
    display: flex;
    align-items: flex-end;
    height: 84px;
    border-top: 2px solid #626365;
    border-left: 2px solid #4b4c4f;
    border-top-left-radius: 10px;
    border-top-right-radius: 10px;
    background: #202124;
}
.lights {
    display: flex;
    align-self: center;
    gap: 16px;
    margin: 0 28px 0 24px;
}
.light {
    width: 24px;
    height: 24px;
    border-radius: 50%;
}
.close {
    background: #ed6a5e;
}
.minimize {
    background: #e0c04c;
}
.zoom {
    background: #71bf46;
}
.tab {
    display: flex;
    align-items: center;
    flex: 0 1 128px;
    min-width: 0;
    height: 68px;
    padding-left: 14px;
    color: #bdc1c6;
    text-align: left;
}
.tab::after {
    content: "";
    width: 2px;
    height: 40px;
    margin-left: auto;
    background: #55575b;
}
.tab.narrow {
    flex-basis: 126px;
}
.tab.no-line::after,
.tab.active::after {
    display: none;
}
.favicon {
    flex: none;
    width: 32px;
    height: 32px;
    margin-right: 15px;
}
.react-tile {
    border-radius: 4px;
    background: #7fd7f7;
    color: #20232a;
}
.title {
    width: 52px;
    overflow: hidden;
    white-space: nowrap;
    line-height: 36px;
    -webkit-mask-image: linear-gradient(90deg, #000 60%, transparent);
    mask-image: linear-gradient(90deg, #000 60%, transparent);
}
.title:first-child {
    width: 98px;
}
.tab.active {
    position: relative;
    border-radius: 16px 16px 0 0;
    background: #35363a;
    color: #f1f3f4;
}
/* outward curves at the foot of the active tab */
.tab.active::before {
    content: "";
    position: absolute;
    right: -16px;
    bottom: 0;
    left: -16px;
    height: 16px;
    background:
        radial-gradient(circle at 0 0, transparent 15px, #35363a 16px) left / 16px 16px no-repeat,
        radial-gradient(circle at 100% 0, transparent 15px, #35363a 16px) right / 16px 16px no-repeat;
}
.active .title {
    width: 8px;
    margin-right: 16px;
    -webkit-mask-image: none;
    mask-image: none;
}
.new-tab {
    display: flex;
    align-items: center;
    justify-content: center;
    width: 88px;
    height: 68px;
}
.toolbar {
    display: flex;
    align-items: center;
    height: 74px;
    padding: 0 12px 0 10px;
    border-left: 2px solid #56575a;
    border-bottom: 2px solid #28292b;
    background: #35363a;
}
.tool {
    display: flex;
    align-items: center;
    justify-content: center;
    flex: none;
    width: 64px;
    height: 56px;
}
.omnibox {
    display: flex;
    align-items: center;
    flex: 1;
    height: 56px;
    margin: 0 12px;
    padding: 0 21px 0 27px;
    border-radius: 28px;
    background: #202124;
}
.url {
    flex: 1;
    margin-left: 22px;
    padding: 0;
    border: 0;
    outline: 0;
    font: inherit;
    font-size: 27px;
    line-height: 40px;
    color: transparent;
    /* host in white, path in grey */
    background: linear-gradient(90deg, #fff 378px, #8b8d90 378px);
    -webkit-background-clip: text;
    background-clip: text;
}
.react-ext {
    border-radius: 3px;
    background: #2b2c2f;
    color: #fff;
}
.divider {
    width: 2px;
    height: 32px;
    margin: 0 12px;
    background: #606164;
}
.avatar {
    width: 44px;
    height: 44px;
    border-radius: 50%;
    background: #4b33a3;
    font-size: 18px;
    line-height: 42px;
}
.page {
    flex: 1;
    padding: 0 16px;
    color: #000;
}
.page h1 {
    margin: 30px 0;
    font-family: "Noto Sans", sans-serif;
    font-size: 62px;
    font-weight: 600;
    line-height: 88px;
}

/* dock */
.desktop {
    display: flex;
    justify-content: center;
    height: 103px;
    background: linear-gradient(#000205, #07172a);
}
.dock {
    position: relative;
    display: flex;
    align-items: flex-start;
    padding: 4px 3px 0;
    border: 3px solid #3b4048;
    border-bottom: 0;
    border-radius: 12px 12px 0 0;
    background: #151b26;
    box-shadow: 0 0 90px rgba(0, 0, 0, 0.16);
}
.app {
    width: 84px;
}
.app svg {
    width: 84px;
    height: 84px;
}
.app.running::after {
    content: "";
    display: block;
    width: 8px;
    height: 8px;
    margin: 0 auto;
    border-radius: 50%;
    background: #969ba6;
}
.dock-line {
    width: 2px;
    height: 74px;
    margin: 8px 18px 0;
    background: #555a63;
}

/* lettering inside icons */
.t-month {
    font-size: 13px;
    fill: #fff;
}
.t-day {
    font-size: 36px;
    font-weight: 300;
    fill: #222;
}
.t-pages {
    font-size: 8px;
    fill: #fff;
}
.t-key {
    font-size: 4px;
    font-weight: 700;
    fill: #333;
}
.t-pc {
    font-size: 27px;
    font-weight: 700;
    fill: #fff;
}
.t-talk {
    font-size: 16px;
    font-weight: 800;
    fill: #f7e14b;
}
.t-badge {
    font-size: 17px;
    fill: #fff;
}
.t-xml {
    font-size: 10px;
    font-weight: 300;
    fill: #333;
}
.t-api {
    font-size: 7px;
    font-weight: 700;
    fill: #fff;
}
.t-dock {
    font-size: 12px;
    font-weight: 700;
    fill: #d9d6c8;
}
```
